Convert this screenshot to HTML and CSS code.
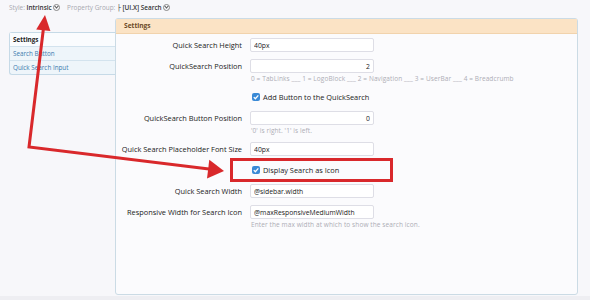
FILE: index.html
```html
<!DOCTYPE html>
<html lang="en">
<head>
    <meta charset="UTF-8">
    <title>Style Properties - Search</title>
    <link rel="stylesheet" href="styles.css">
</head>
<body>
<div class="topbar">
    <span class="muted">Style:</span> <b>Intrinsic</b> <span class="drop"></span>
    <span class="muted spaced">Property Group:</span> <b>├ [UI.X] Search</b> <span class="drop"></span>
</div>

<div class="page">
    <ul class="tabs">
        <li class="active">Settings</li>
        <li>Search Button</li>
        <li>Quick Search Input</li>
    </ul>

    <div class="panel">
        <div class="panel-head">Settings</div>
        <div class="form">
            <div class="row">
                <label>Quick Search Height</label>
                <div class="field"><input type="text" value="40px"></div>
            </div>
            <div class="row">
                <label>QuickSearch Position</label>
                <div class="field">
                    <input type="text" class="num" value="2">
                    <p class="hint">0 = TabLinks ___ 1 = LogoBlock ___ 2 = Navigation ___ 3 = UserBar ___ 4 = Breadcrumb</p>
                </div>
            </div>
            <div class="row check-row">
                <label></label>
                <div class="field"><span class="check"><svg viewBox="0 0 10 10"><path d="M2.2 5.2 L4.2 7.2 L7.9 2.9" fill="none" stroke="#fff" stroke-width="1.6"/></svg></span>Add Button to the QuickSearch</div>
            </div>
            <div class="row">
                <label>QuickSearch Button Position</label>
                <div class="field">
                    <input type="text" class="num" value="0">
                    <p class="hint">'0' is right. '1' is left.</p>
                </div>
            </div>
            <div class="row">
                <label>Quick Search Placeholder Font Size</label>
                <div class="field"><input type="text" value="40px"></div>
            </div>
            <div class="row check-row">
                <label></label>
                <div class="field"><span class="check"><svg viewBox="0 0 10 10"><path d="M2.2 5.2 L4.2 7.2 L7.9 2.9" fill="none" stroke="#fff" stroke-width="1.6"/></svg></span>Display Search as Icon</div>
            </div>
            <div class="row">
                <label>Quick Search Width</label>
                <div class="field"><input type="text" value="@sidebar.width"></div>
            </div>
            <div class="row">
                <label>Responsive Width for Search Icon</label>
                <div class="field">
                    <input type="text" value="@maxResponsiveMediumWidth">
                    <p class="hint">Enter the max width at which to show the search icon.</p>
                </div>
            </div>
        </div>
    </div>
</div>
<div class="footer-band"></div>

<!-- annotation arrows drawn over the screenshot -->
<svg class="marks" width="590" height="300" viewBox="0 0 590 300">
    <polyline points="43.5,28 29,147 209,169" fill="none" stroke="#d9282b" stroke-width="3" stroke-linejoin="miter"/>
    <polygon points="45,15 36.2,29.5 50.4,31" fill="#d9282b"/>
    <polygon points="224,171 207,178.5 209.3,159.8" fill="#d9282b"/>
    <rect x="231.5" y="159.5" width="160" height="21" fill="none" stroke="#d9282b" stroke-width="3"/>
</svg>
</body>
</html>
```

FILE: styles.css
```css
body {
    margin: 0;
    font-family: "Open Sans", "DejaVu Sans", sans-serif;
    font-size: 7.4px;
    background-color: #f7f7fa;
    color: #222;
    width: 590px;
    height: 300px;
    overflow: hidden;
    position: relative;
}

.topbar {
    height: 18px;
    line-height: 16px;
    padding-left: 9px;
    font-size: 6.4px;
    color: #333;
}

.topbar b {
    font-weight: 600;
}

.topbar .muted {
    color: #a8a8b0;
}

.topbar .spaced {
    margin-left: 5px;
}

.drop {
    display: inline-block;
    width: 5px;
    height: 5px;
    border: 1px solid #888;
    border-radius: 50%;
    vertical-align: -1px;
    position: relative;
}

.drop::after {
    content: "";
    position: absolute;
    left: 1px;
    top: 0;
    width: 2px;
    height: 2px;
    border-right: 1px solid #555;
    border-bottom: 1px solid #555;
    transform: rotate(45deg);
}

.page {
    display: flex;
    align-items: flex-start;
    padding-left: 9px;
}

.tabs {
    list-style: none;
    margin: 14px 0 0;
    padding: 0;
    width: 105px;
    border: 1px solid #c6dae7;
    border-right: none;
    border-radius: 3px 0 0 3px;
    background: #eef5fa;
}

.tabs li {
    height: 13px;
    line-height: 13px;
    padding-left: 3px;
    color: #3d7bae;
    font-size: 6.3px;
    border-top: 1px solid #d3e3ee;
}

.tabs li:first-child {
    border-top: none;
}

.tabs li.active {
    background: #fafcfe;
    color: #222;
    font-weight: bold;
}

.panel {
    width: 461px;
    height: 275px;
    border: 1px solid #cbdbe5;
    border-radius: 3px;
    background: #fbfbfd;
}

.panel-head {
    height: 14px;
    line-height: 14px;
    padding-left: 8px;
    background: #fbe3c5;
    border-bottom: 1px solid #f1d3ad;
    color: #6b4a28;
    font-weight: bold;
    font-size: 6.6px;
}

.form {
    display: flex;
    flex-direction: column;
    gap: 7px;
    padding-top: 4px;
}

.row {
    display: grid;
    grid-template-columns: 126px 124px;
    column-gap: 8px;
    align-items: start;
}

.row label {
    text-align: right;
    line-height: 14px;
    white-space: nowrap;
    color: #222;
}

.field input {
    display: block;
    box-sizing: border-box;
    width: 124px;
    height: 14px;
    margin: 0;
    padding: 0 3px;
    border: 1px solid #dedee6;
    border-radius: 2px;
    background: #fff;
    font-family: inherit;
    font-size: 6.8px;
    color: #222;
}

.field input.num {
    text-align: right;
}

.hint {
    margin: 1px 0 0 1px;
    white-space: nowrap;
    font-size: 6.5px;
    line-height: 9px;
    letter-spacing: 0.1px;
    color: #adadb5;
}

.check-row .field {
    height: 14px;
    line-height: 14px;
    white-space: nowrap;
    display: flex;
    align-items: center;
}

.check {
    display: inline-block;
    width: 8px;
    height: 8px;
    margin: 0 3px 0 2px;
    border-radius: 2px;
    background: #3a8ad6;
}

.check svg {
    display: block;
    width: 8px;
    height: 8px;
}

.footer-band {
    height: 5px;
    margin-top: 1px;
    background: #eeeef2;
}

.marks {
    position: absolute;
    left: 0;
    top: 0;
    pointer-events: none;
}
```
